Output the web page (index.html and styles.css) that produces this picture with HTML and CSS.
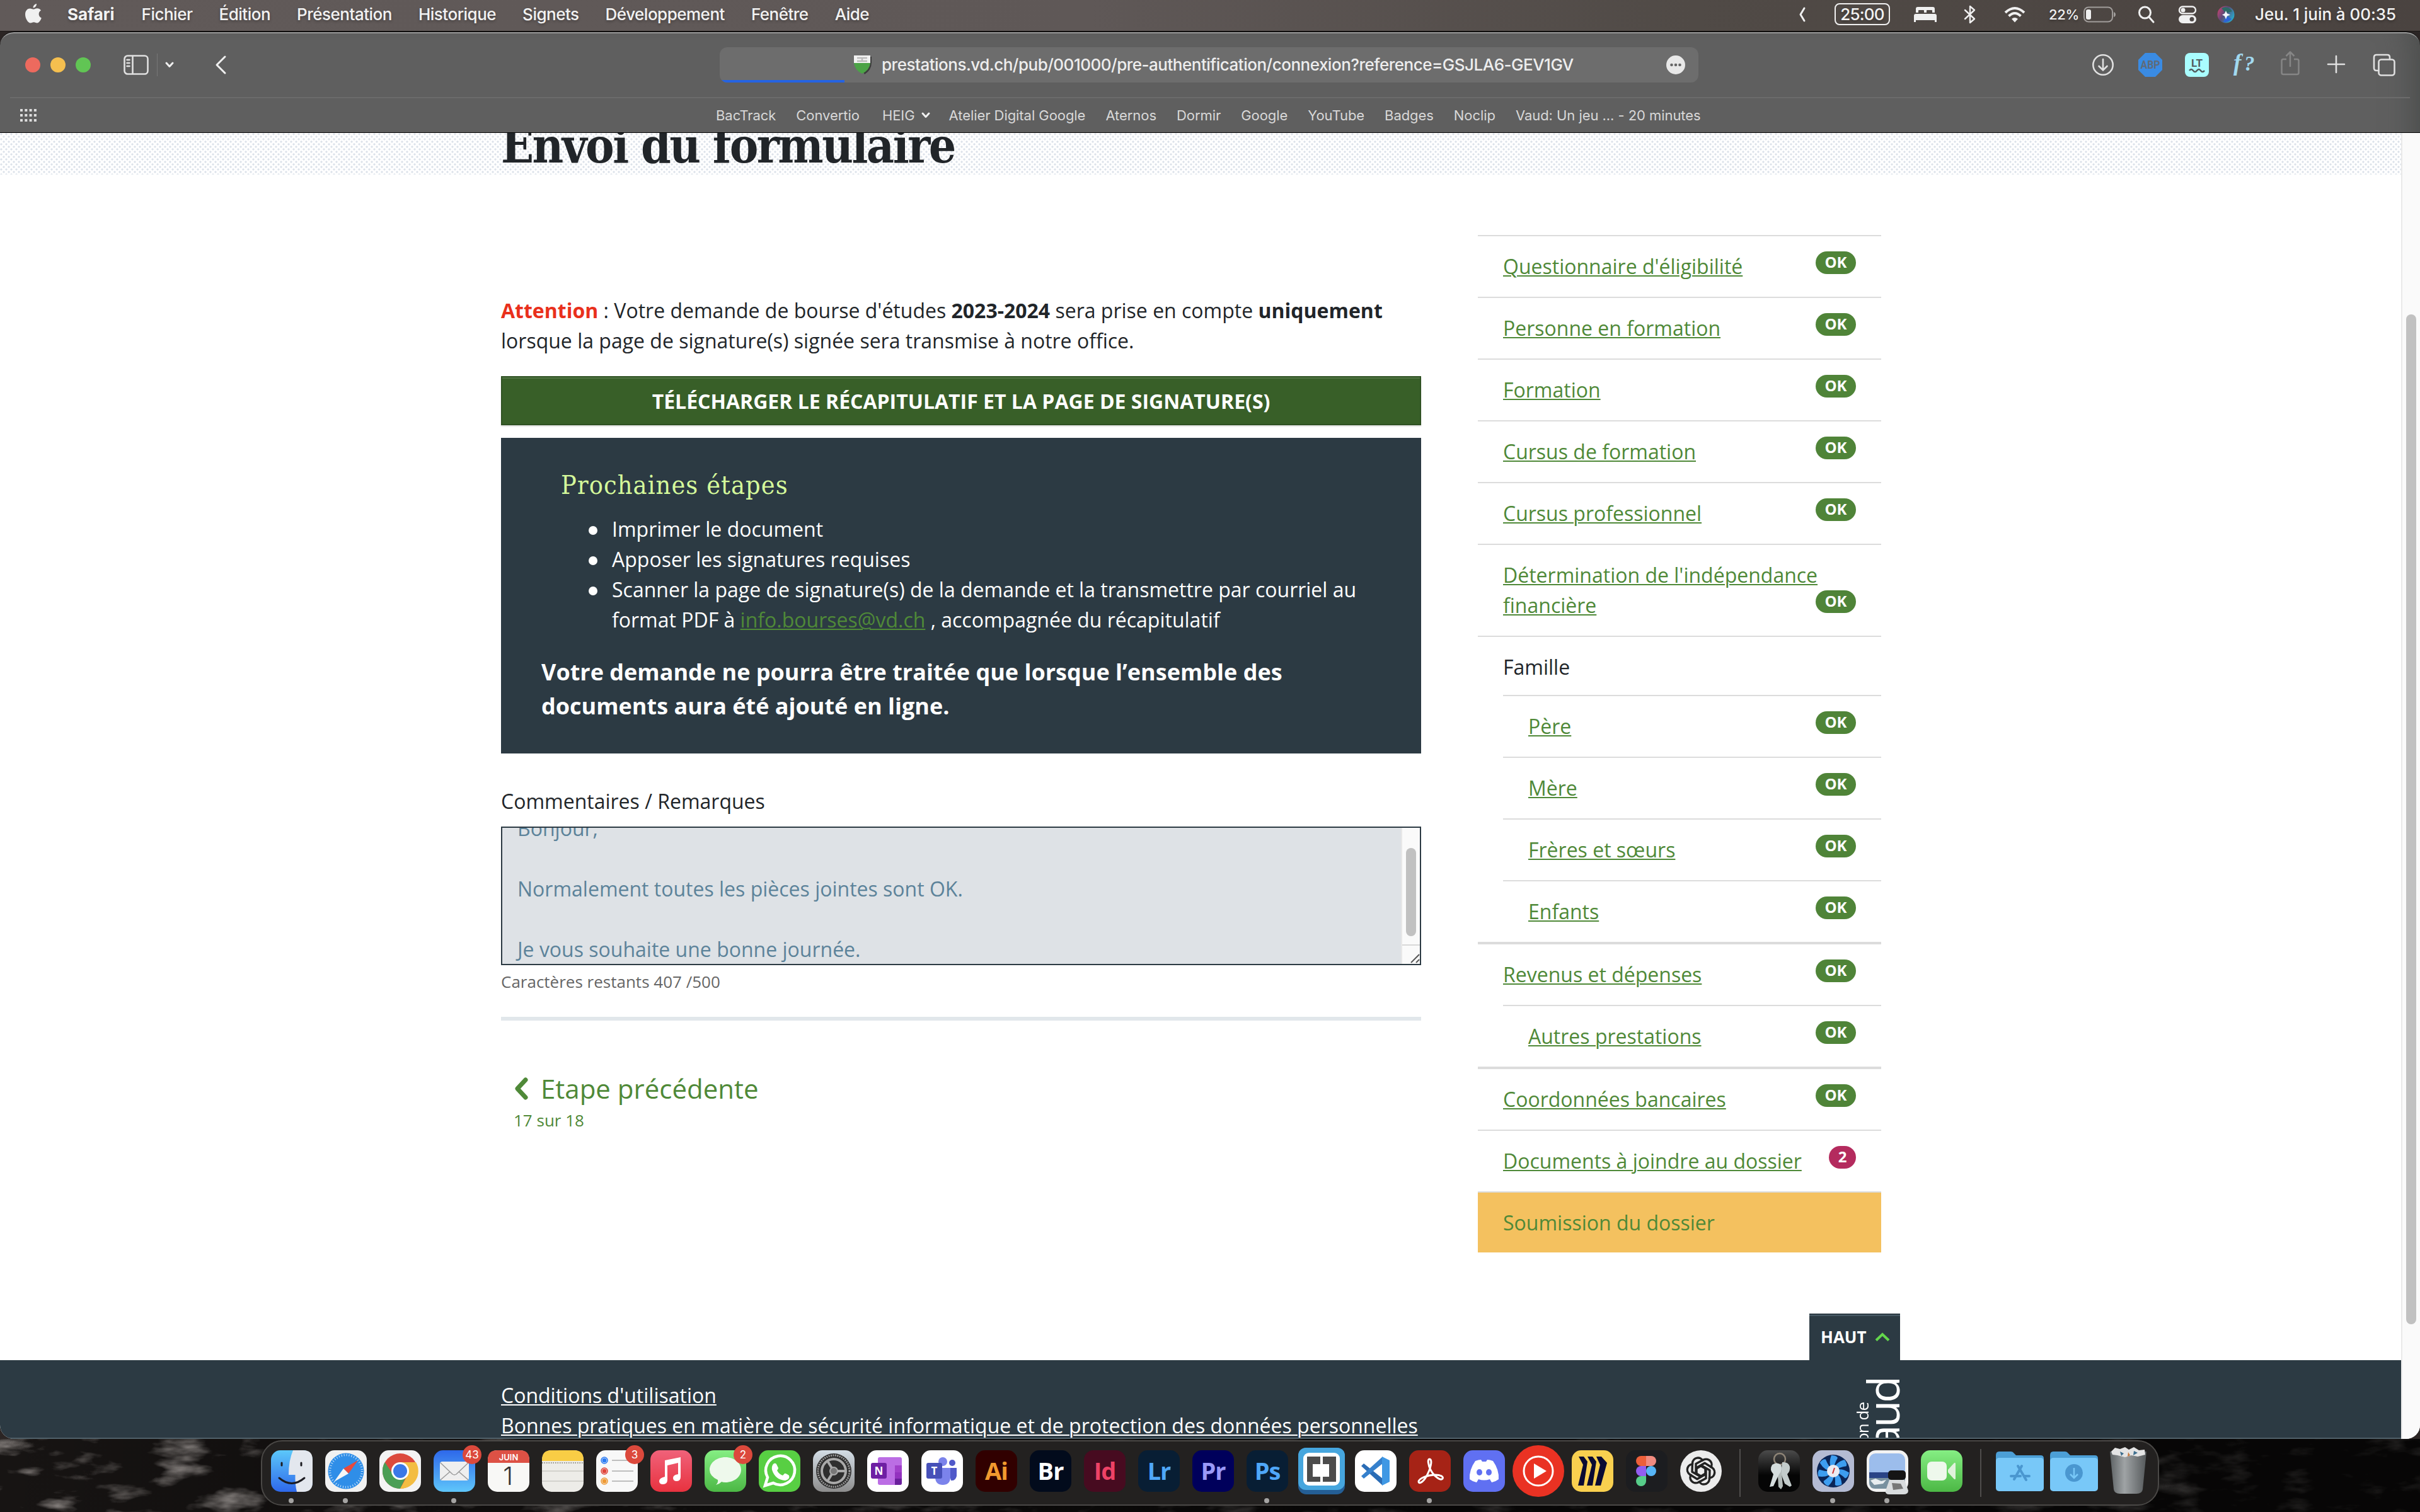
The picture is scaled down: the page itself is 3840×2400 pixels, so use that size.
FILE: index.html
```html
<!DOCTYPE html>
<html lang="fr">
<head>
<meta charset="utf-8">
<title>Envoi du formulaire</title>
<link rel="stylesheet" href="styles.css">
</head>
<body>
<header class="menubar">
  <nav class="menus">
    <svg class="apple" width="26" height="32" viewBox="0 0 26 32"><path fill="#f0f0f0" d="M18 0c.3 3-2.400 6.500-5.400 6.500C12.200 3.500 15 .5 18 0zM13.300 8.800c1.400 0 3-1.500 5.700-1.500 2.200 0 4.600 1.200 6 3.200-5 3-4.200 10 .8 12-1.100 3.300-4 8-6.800 8-2.200 0-2.800-1.300-5.400-1.300-2.500 0-3.300 1.300-5.300 1.300C4.500 30.500 0 23.500 0 16.800c0-6 3.800-9.300 7.500-9.300 2.500 0 4.400 1.300 5.800 1.300z"/></svg>
    <b>Safari</b><span>Fichier</span><span>Édition</span><span>Présentation</span><span>Historique</span><span>Signets</span><span>Développement</span><span>Fenêtre</span><span>Aide</span>
  </nav>
  <div class="status">
    <svg width="10" height="24" viewBox="0 0 10 24"><path class="ln w3" d="M8 2L2 12l6 10"/></svg>
    <span class="timer">25:00</span>
    <svg class="m-bed" width="38" height="26" viewBox="0 0 38 26"><path fill="#f0f0f0" d="M4 10V4q0-3 3-3h24q3 0 3 3v6h-4V7q0-1-1-1h-7q-1 0-1 1v3h-4V7q0-1-1-1H9q-1 0-1 1v3zM1 25V15q0-3 3-3h30q3 0 3 3v10h-3v-3H4v3z"/></svg>
    <svg class="m-bt" width="20" height="30" viewBox="0 0 20 30"><path class="ln w2" d="M2 8l15 14-7 6V2l7 6L2 22"/></svg>
    <svg class="m-wifi" width="34" height="26" viewBox="0 0 34 26"><path fill="none" stroke="#f0f0f0" stroke-width="4" d="M2 10q15-14 30 0M7.500 15.500q9.500-9 19 0"/><path fill="#f0f0f0" d="M12 20q5-4 10 0l-5 5.500z"/></svg>
    <span class="pct">22%</span>
    <svg class="m-bat" width="52" height="26" viewBox="0 0 52 26"><rect x="1" y="1.500" width="45" height="23" rx="7" fill="none" stroke="#a09c9a" stroke-width="2"/><rect x="4" y="5" width="8" height="16" rx="3" fill="#f0f0f0"/><path fill="#a09c9a" d="M48 9q3 1 3 4t-3 4z"/></svg>
    <svg class="m-search" width="26" height="28" viewBox="0 0 26 28"><circle class="ln w3" cx="10.500" cy="11" r="9"/><path class="ln w3" d="M17 18l7 8"/></svg>
    <svg class="m-ctl" width="30" height="28" viewBox="0 0 30 28"><rect x="2" y="1.500" width="26" height="11" rx="5.500" class="ln w2"/><circle cx="8" cy="7" r="3.500" fill="#f0f0f0"/><rect x="1" y="15" width="28" height="13" rx="6.500" fill="#f0f0f0"/><circle cx="22" cy="21.500" r="3.500" fill="#504a48"/></svg>
    <svg class="m-siri" width="28" height="28" viewBox="0 0 28 28"><defs><linearGradient id="siri" x1="0" x2="1" y2=".6"><stop stop-color="#e0406f"/><stop offset=".5" stop-color="#5a4a78"/><stop offset="1" stop-color="#2aa6c8"/></linearGradient></defs><circle cx="14" cy="14" r="13.500" fill="url(#siri)"/><path fill="#2b6a66" d="M7 4q10-5 17 5l-10 3z"/><path fill="#2c64d8" d="M10 26l5-10 8 5q-5 6-13 5z"/><path fill="#f4f6fb" d="M14 8l2 4.500 5 2-5 2-2 5-2-5-4-2 4-2z"/></svg>
    <span class="date">Jeu. 1 juin à 00:35</span>
  </div>
</header>

<div class="window">
  <div class="toolbar">
    <div class="tb-left">
      <i class="light red"></i><i class="light amber"></i><i class="light green"></i>
      <svg class="t-side" width="40" height="32" viewBox="0 0 40 32"><rect class="tl" x="1.500" y="1.500" width="37" height="29" rx="5"/><path class="tl" d="M14.500 2v28M5.500 8h4M5.500 13h4M5.500 18h4"/></svg>
      <i class="t-div"></i>
      <svg class="t-down" width="14" height="10" viewBox="0 0 14 10"><path class="ln w3" d="M2 2l5 5.500L12 2"/></svg>
      <svg class="t-back" width="18" height="30" viewBox="0 0 18 30"><path class="ln w3" d="M16 2L3 15l13 13"/></svg>
    </div>
    <div class="address">
      <svg class="fav" width="30" height="32" viewBox="0 0 30 32"><path fill="#3b3b3b" d="M3 3h26v9q0 12-11 19z"/><path fill="#f2f2f2" d="M1 1h26v12H1z"/><path fill="#4ba346" d="M1 13h26q-1 11-13 17Q2 24 1 13z"/><path stroke="#bbb" stroke-width="2.500" d="M6 5h16M6 10h16M14 5v5"/></svg>
      <span>prestations.vd.ch/pub/001000/pre-authentification/connexion?reference=GSJLA6-GEV1GV</span>
      <svg class="more" width="30" height="30" viewBox="0 0 30 30"><circle cx="15" cy="15" r="15" fill="#e8e8e8"/><g fill="#666"><circle cx="8.500" cy="15" r="2.300"/><circle cx="15" cy="15" r="2.300"/><circle cx="21.500" cy="15" r="2.300"/></g></svg>
      <i class="progress"></i>
    </div>
    <div class="tb-right">
      <svg width="36" height="36" viewBox="0 0 36 36"><circle class="tl" cx="18" cy="18" r="15.700"/><path class="tl" d="M18 9v17M11.500 20l6.500 6.500 6.500-6.500"/></svg>
      <svg class="x-abp" width="38" height="38" viewBox="0 0 38 38"><path fill="#3a8be3" d="M11 0h16l11 11v16L27 38H11L0 27V11z"/><text x="19" y="25" text-anchor="middle" textLength="31" lengthAdjust="spacingAndGlyphs" font-family="Roboto" font-size="18" font-weight="700" fill="#5f6a78">ABP</text></svg>
      <svg class="x-lt" width="38" height="38" viewBox="0 0 38 38"><rect width="38" height="38" rx="8" fill="#a9fdff"/><text x="19" y="22" text-anchor="middle" font-family="Roboto" font-size="17" font-weight="700" fill="#525c5e">LT</text><path fill="none" stroke="#525c5e" stroke-width="2.500" d="M7 28q3-4 6 0t6 0 6 0 6 0"/></svg>
      <svg class="x-f" width="42" height="38" viewBox="0 0 42 38"><text x="5" y="28" font-family="Liberation Serif" font-style="italic" font-size="37" font-weight="700" fill="#a2d9ef">f</text><text x="22" y="28" font-family="Liberation Serif" font-style="italic" font-size="33" font-weight="700" fill="#a2d9ef">?</text></svg>
      <svg class="x-share" width="30" height="40" viewBox="0 0 30 40"><path fill="none" stroke="#868686" stroke-width="2.500" stroke-linejoin="round" d="M9 14H4q-2.500 0-2.500 2.500v19Q1.500 38 4 38h22q2.500 0 2.500-2.500v-19Q28.500 14 26 14h-5M15 26V3M8.500 9L15 2.500 21.500 9"/></svg>
      <svg class="x-plus" width="28" height="28" viewBox="0 0 28 28"><path class="tl" d="M14 1v26M1 14h26"/></svg>
      <svg class="x-tabs" width="36" height="36" viewBox="0 0 36 36"><path class="tl" d="M9 27H6q-4 0-4-4V6q0-4 4-4h17q4 0 4 4v3"/><rect class="tl" x="9.500" y="9.500" width="25" height="25" rx="4"/></svg>
    </div>
  </div>
  <div class="bookmarks">
    <svg class="grid" width="26" height="20" viewBox="0 0 26 20"><path stroke="#ddd" stroke-width="4" stroke-dasharray="4 3.300" d="M0 2h26M0 10h26M0 18h26"/></svg>
    <span>BacTrack</span><span>Convertio</span><span class="heig">HEIG<svg width="14" height="10" viewBox="0 0 14 10"><path class="ln w3" d="M2 2l5 5.500L12 2"/></svg></span><span>Atelier Digital Google</span><span>Aternos</span><span>Dormir</span><span>Google</span><span>YouTube</span><span>Badges</span><span>Noclip</span><span>Vaud: Un jeu ... - 20 minutes</span>
  </div>

  <div class="viewport">
    <div class="page">
      <div class="band"><h1>Envoi du formulaire</h1></div>
      <main>
        <section class="form">
          <p class="notice"><b class="warn">Attention</b> : Votre demande de bourse d'études <b>2023-2024</b> sera prise en compte <b>uniquement</b><br>lorsque la page de signature(s) signée sera transmise à notre office.</p>
          <a class="download">TÉLÉCHARGER LE RÉCAPITULATIF ET LA PAGE DE SIGNATURE(S)</a>
          <div class="panel">
            <h2>Prochaines étapes</h2>
            <ul>
              <li>Imprimer le document</li>
              <li>Apposer les signatures requises</li>
              <li>Scanner la page de signature(s) de la demande et la transmettre par courriel au<br>format PDF à <a>info.bourses@vd.ch</a> , accompagnée du récapitulatif</li>
            </ul>
            <p>Votre demande ne pourra être traitée que lorsque l’ensemble des<br>documents aura été ajouté en ligne.</p>
          </div>
          <label>Commentaires / Remarques</label>
          <div class="textarea">
            <div class="ta-text">Bonjour,<br><br>Normalement toutes les pièces jointes sont OK.<br><br>Je vous souhaite une bonne journée.</div>
            <div class="ta-bar"><div class="ta-track"><i></i></div><svg width="30" height="29" viewBox="0 0 30 29"><path stroke="#555" stroke-width="2" d="M14 27L27 14M22 27l5-5"/></svg></div>
          </div>
          <p class="count">Caractères restants 407 /500</p>
          <hr>
          <div class="prev">
            <div class="prev-link"><svg width="24" height="38" viewBox="0 0 24 38"><path fill="none" stroke="#4f8938" stroke-width="7" stroke-linecap="round" stroke-linejoin="round" d="M19 5L6 19l13 14"/></svg>Etape précédente</div>
            <div class="prev-step">17 sur 18</div>
          </div>
        </section>
        <aside class="steps">
          <div class="step"><a>Questionnaire d'éligibilité</a><em>OK</em></div>
          <div class="step"><a>Personne en formation</a><em>OK</em></div>
          <div class="step"><a>Formation</a><em>OK</em></div>
          <div class="step"><a>Cursus de formation</a><em>OK</em></div>
          <div class="step"><a>Cursus professionnel</a><em>OK</em></div>
          <div class="step tall"><a>Détermination de l'indépendance<br>financière</a><em>OK</em></div>
          <div class="step title">Famille</div>
          <div class="sub">
            <div class="step"><a>Père</a><em>OK</em></div>
            <div class="step"><a>Mère</a><em>OK</em></div>
            <div class="step"><a>Frères et sœurs</a><em>OK</em></div>
            <div class="step"><a>Enfants</a><em>OK</em></div>
          </div>
          <div class="step after"><a>Revenus et dépenses</a><em>OK</em></div>
          <div class="sub"><div class="step"><a>Autres prestations</a><em>OK</em></div></div>
          <div class="step after"><a>Coordonnées bancaires</a><em>OK</em></div>
          <div class="step"><a>Documents à joindre au dossier</a><em class="todo">2</em></div>
          <div class="step current">Soumission du dossier</div>
        </aside>
      </main>
      <div class="top-row"><a class="top">HAUT<svg width="24" height="16" viewBox="0 0 24 16"><path fill="none" stroke="#63d64b" stroke-width="4" d="M2 13.500L12 4l10 9.500"/></svg></a></div>
      <footer>
        <div class="links"><a>Conditions d'utilisation</a><a>Bonnes pratiques en matière de sécurité informatique et de protection des données personnelles</a></div>
        <div class="logo"><span class="canton">canton de</span><span class="vaud">vaud</span></div>
      </footer>
    </div>
    <div class="scroll"><i></i></div>
  </div>
</div>

<div class="desktop">
  <svg class="rocks" width="3840" height="116" viewBox="0 0 3840 116" preserveAspectRatio="none"><defs><filter id="soft" x="0" y="0" width="1" height="1" filterUnits="objectBoundingBox"><feTurbulence type="fractalNoise" baseFrequency=".012 .035" numOctaves="4" seed="4"/><feColorMatrix values="0 0 0 0 .5  0 0 0 0 .46  0 0 0 0 .44  2.200 0 0 0 -1.150"/></filter><linearGradient id="fade"><stop stop-color="#000" stop-opacity="0"/><stop offset=".14" stop-color="#000" stop-opacity=".3"/><stop offset=".6" stop-color="#000" stop-opacity=".7"/><stop offset="1" stop-color="#000" stop-opacity=".7"/></linearGradient></defs><rect width="3840" height="116" fill="#171413"/><rect width="3840" height="116" filter="url(#soft)"/><rect width="3840" height="116" fill="url(#fade)"/></svg>
  <div class="dock">
    <div class="app run"><svg viewBox="0 0 66 66"><defs><linearGradient id="fi" y2="1" x2="0"><stop stop-color="#5cc8fa"/><stop offset="1" stop-color="#2e68ea"/></linearGradient></defs><rect width="66" height="66" rx="15" fill="url(#fi)"/><path fill="#e3e7ee" d="M35 0h16q15 0 15 15v36q0 15-15 15H41q-3-12-2.500-27H28Q28 16 35 0z"/><path fill="none" stroke="#1c1c22" stroke-width="3" stroke-linecap="round" d="M17 20v4M48 20v4M13 44q20 17 40 0"/></svg></div>
    <div class="app run"><svg viewBox="0 0 66 66"><rect width="66" height="66" rx="15" fill="#f1f1f1"/><circle cx="33" cy="33" r="28.500" fill="#2f8ee8"/><circle cx="33" cy="33" r="25.500" fill="none" stroke="#cfe6fa" stroke-width="3.500" stroke-dasharray="1 3"/><path fill="#e8493c" d="M52 16L29 29l8 8z"/><path fill="#f6f6f6" d="M14 50l15-21 8 8z"/></svg></div>
    <div class="app"><svg viewBox="0 0 66 66"><rect width="66" height="66" rx="15" fill="#f3f3f3"/><circle cx="33" cy="33" r="28" fill="#dc4a3d"/><path fill="#4a9e55" d="M8.700 19A28 28 0 0 0 33 61l11-22-22 0z"/><path fill="#f3bd42" d="M33 61a28 28 0 0 0 25-42H33l12 20z"/><circle cx="33" cy="33" r="14" fill="#fff"/><circle cx="33" cy="33" r="11" fill="#3b78e7"/></svg></div>
    <div class="app run"><svg viewBox="0 0 66 66"><defs><linearGradient id="ma" y2="1" x2="0"><stop stop-color="#2e68ea"/><stop offset="1" stop-color="#5fc6fb"/></linearGradient></defs><rect width="66" height="66" rx="15" fill="url(#ma)"/><rect x="10" y="18" width="46" height="30" rx="4" fill="#efefef"/><path fill="none" stroke="#999" stroke-width="1.500" d="M11 20l19 18q3 2 6 0l19-18M11 47l15-13M55 47L40 34"/></svg><em>43</em></div>
    <div class="app"><svg viewBox="0 0 66 66"><rect width="66" height="66" rx="15" fill="#f8f8f6"/><path fill="#dd5145" d="M0 20v-5Q0 0 15 0h36q15 0 15 15v5z"/><text x="33" y="16" text-anchor="middle" font-family="Inter" font-size="13" font-weight="600" fill="#fff">JUIN</text><text x="32" y="55" text-anchor="middle" font-family="Inter" font-weight="300" font-size="40" fill="#333">1</text></svg></div>
    <div class="app"><svg viewBox="0 0 66 66"><rect width="66" height="66" rx="15" fill="#edece8"/><path fill="#f9cd45" d="M0 17v-2Q0 0 15 0h36q15 0 15 15v2z"/><path stroke="#b9b8b2" d="M0 33h66M0 49h66"/><path stroke="#8f8d86" stroke-width="2" stroke-dasharray="1.500 2" d="M0 20h66"/></svg></div>
    <div class="app"><svg viewBox="0 0 66 66"><rect width="66" height="66" rx="15" fill="#f8f8f8"/><path stroke="#aaa" stroke-width="1.500" d="M25 16h34M25 33h34M25 49h34"/><g stroke-width="1.500" fill="none"><circle cx="13" cy="16" r="5" stroke="#2b7bf3"/><circle cx="13" cy="33" r="5" stroke="#e0443a"/><circle cx="13" cy="49" r="5" stroke="#ee9a36"/></g><circle cx="13" cy="16" r="3.500" fill="#2b7bf3"/><circle cx="13" cy="33" r="3.500" fill="#e0443a"/><circle cx="13" cy="49" r="3.500" fill="#ee9a36"/></svg><em>3</em></div>
    <div class="app"><svg viewBox="0 0 66 66"><defs><linearGradient id="mu" y2="1" x2="0"><stop stop-color="#f0627a"/><stop offset="1" stop-color="#e8323f"/></linearGradient></defs><rect width="66" height="66" rx="15" fill="url(#mu)"/><path fill="#fff" d="M23 16l25-5v31q0 7-6 7-6 0-6-5t8-6V20l-17 4v23q0 7-7 7-6 0-6-5t9-7z"/></svg></div>
    <div class="app"><svg viewBox="0 0 66 66"><defs><linearGradient id="gr" y2="1" x2="0"><stop stop-color="#85ee83"/><stop offset="1" stop-color="#4cb845"/></linearGradient></defs><rect width="66" height="66" rx="15" fill="url(#gr)"/><path fill="#eef9ec" d="M33 11c14 0 25 9 25 20S47 51 33 51q-4 0-6-1-4 4-9 5 4-4 3-8Q8 41 8 31c0-11 11-20 25-20z"/></svg><em>2</em></div>
    <div class="app"><svg viewBox="0 0 66 66"><rect width="66" height="66" rx="15" fill="#58cf43"/><path fill="none" stroke="#fff" stroke-width="4.500" d="M10 56l4-13A23 23 0 1 1 23 52z"/><path fill="#fff" d="M24 21q3-1 4 1l3 6q0 2-2 4 3 6 9 8l3-3q1-1 7 3 2 6-6 8-16-1-21-17-1-7 3-10z"/></svg></div>
    <div class="app"><svg viewBox="0 0 66 66"><defs><linearGradient id="se" y2="1" x2="0"><stop stop-color="#d3dde5"/><stop offset="1" stop-color="#8d8d8d"/></linearGradient></defs><rect width="66" height="66" rx="15" fill="url(#se)"/><circle cx="33" cy="33" r="28" fill="#2e2e2e"/><circle cx="33" cy="33" r="25" fill="none" stroke="#9b9b9b" stroke-width="3" stroke-dasharray="2 1.500"/><circle cx="33" cy="33" r="19" fill="none" stroke="#a9a9a9" stroke-width="4"/><path stroke="#a9a9a9" stroke-width="4" d="M33 33h19M33 33l-10-16M33 33l-10 16"/><circle cx="33" cy="33" r="6" fill="#777" stroke="#a9a9a9" stroke-width="2"/></svg></div>
    <div class="app"><svg viewBox="0 0 66 66"><rect width="66" height="66" rx="15" fill="#fff"/><rect x="17" y="11" width="38" height="44" rx="3" fill="#bb6de4"/><path fill="#a03fc9" d="M44 24h11v11H44z"/><path fill="#9332bf" d="M44 35h11v10H44z"/><path fill="#6a1f9c" d="M44 45h11v7q0 3-3 3h-8z"/><rect x="6" y="20" width="25" height="25" rx="3" fill="#6e1fa3"/><text x="18.500" y="39" text-anchor="middle" font-family="Open Sans" font-size="17" font-weight="700" fill="#fff">N</text></svg></div>
    <div class="app"><svg viewBox="0 0 66 66"><rect width="66" height="66" rx="15" fill="#fff"/><circle cx="34" cy="18" r="7" fill="#7b83eb"/><circle cx="49" cy="20" r="5" fill="#5059c9"/><path fill="#5059c9" d="M42 28h14v13q-2 8-9 7z"/><path fill="#7b83eb" d="M22 28h24v16q-1 11-12 11T22 44z"/><rect x="8" y="20" width="25" height="25" rx="3" fill="#4650b8"/><text x="20.500" y="39" text-anchor="middle" font-family="Open Sans" font-size="17" font-weight="700" fill="#fff">T</text></svg></div>
    <div class="app"><span class="adobe ai">Ai</span></div>
    <div class="app"><span class="adobe br">Br</span></div>
    <div class="app"><span class="adobe id">Id</span></div>
    <div class="app"><span class="adobe lr">Lr</span></div>
    <div class="app"><span class="adobe pr">Pr</span></div>
    <div class="app run"><span class="adobe ps">Ps</span></div>
    <div class="app"><svg viewBox="0 0 66 66"><rect x="-4" y="-4" width="74" height="74" rx="13" fill="#245e95"/><rect x="-4" y="-4" width="74" height="67" rx="12" fill="#46a6de"/><rect x="4" y="4" width="58" height="52" rx="9" fill="#fff"/><path fill="#4c4c4c" d="M10 10h21v12H19v20h12v8H10zM56 10H35v12h10v20H35v8h21z"/></svg></div>
    <div class="app"><svg viewBox="0 0 66 66"><rect width="66" height="66" rx="15" fill="#fff"/><path fill="#2a6cb5" d="M10 25l4-4 30 24v11z"/><path fill="#3580cc" d="M10 41l4 4 30-24V10z"/><path fill="#3f98e4" d="M43 10l12 6v34l-12 6z"/></svg></div>
    <div class="app run"><svg viewBox="0 0 66 66"><rect width="66" height="66" rx="15" fill="#a62316"/><path fill="none" stroke="#fff" stroke-width="3" stroke-linejoin="round" d="M32 14c6 0 2 16-5 28-5 9-12 12-12 8 0-5 14-11 26-11 9 0 14 3 12 6-3 4-14-4-19-14-4-8-5-17-2-17z"/></svg></div>
    <div class="app"><svg viewBox="0 0 66 66"><rect width="66" height="66" rx="15" fill="#6070f2"/><path fill="#fff" d="M19 17q5-2 9-2l2 3h6l2-3q4 0 9 2 10 14 9 29-5 4-11 5l-3-5q-9 3-18 0l-3 5q-6-1-11-5-1-15 9-29z"/><ellipse cx="25.500" cy="35" rx="4.500" ry="5" fill="#6070f2"/><ellipse cx="40.500" cy="35" rx="4.500" ry="5" fill="#6070f2"/></svg></div>
    <div class="app"><svg viewBox="0 0 66 66"><circle cx="33" cy="33" r="41" fill="#ea3223"/><circle cx="33" cy="33" r="23" fill="none" stroke="#fff" stroke-width="3"/><path fill="#fff" d="M26 21l20 12-20 12z"/></svg></div>
    <div class="app"><svg viewBox="0 0 66 66"><rect width="66" height="66" rx="15" fill="#f9d04f"/><path fill="#0a0b33" d="M11 10h8l6 8-6 38h-9l8-33zM25 10h8l6 8-6 38h-9l8-33zM39 10h8l9 10-10 36h-9l8-33z"/></svg></div>
    <div class="app"><svg viewBox="0 0 66 66"><rect width="66" height="66" rx="15" fill="#1c1d20"/><path fill="#ec5f3a" d="M32 9v16h-8a8 8 0 0 1 0-16z"/><path fill="#f08b80" d="M32 9h8a8 8 0 0 1 0 16h-8z"/><path fill="#925ef0" d="M32 25v16h-8a8 8 0 0 1 0-16z"/><circle cx="40" cy="33" r="8" fill="#56b5f7"/><path fill="#57cd8a" d="M32 41v8a8 8 0 1 1-8-8z"/></svg></div>
    <div class="app"><svg viewBox="0 0 66 66"><circle cx="33" cy="33" r="33" fill="#ececec"/><g fill="none" stroke="#222" stroke-width="3.400" stroke-linejoin="round"><path id="petal" d="M33 25l8 4.500v15L29 51c-9 4-17-6-11-13"/><use href="#petal" transform="rotate(60 33 33)"/><use href="#petal" transform="rotate(120 33 33)"/><use href="#petal" transform="rotate(180 33 33)"/><use href="#petal" transform="rotate(240 33 33)"/><use href="#petal" transform="rotate(300 33 33)"/></g></svg></div>
    <i class="sep"></i>
    <div class="app"><svg viewBox="0 0 66 66"><defs><linearGradient id="ke" y2="1" x2="0"><stop stop-color="#4b4b4b"/><stop offset=".6" stop-color="#050505"/></linearGradient></defs><rect width="66" height="66" rx="15" fill="url(#ke)"/><ellipse cx="34" cy="14" rx="9" ry="9" fill="none" stroke="#8f8577" stroke-width="2.500"/><path fill="#c3cccb" d="M38 19q10-1 12 7 1 7-4 12l7 18-3 2-8-5-6-16z"/><path fill="#b4bcba" d="M30 24h6l3 33-3 5-4-4z"/><path fill="#d5dddd" d="M22 23q7-5 14 0 3 9-3 15l-9 19-6 1 6-20q-7-7-2-15z"/></svg></div>
    <div class="app run"><svg viewBox="0 0 66 66"><rect width="66" height="66" rx="15" fill="#b4bbd3"/><circle cx="33" cy="33" r="26" fill="#0b2557"/><g fill="#3d9df0"><path id="blade" d="M33 33q-9-10-3-25 8 0 10 4-6 10-7 21z"/><use href="#blade" transform="rotate(51.400 33 33)"/><use href="#blade" transform="rotate(102.800 33 33)"/><use href="#blade" transform="rotate(154.300 33 33)"/><use href="#blade" transform="rotate(205.700 33 33)"/><use href="#blade" transform="rotate(257.100 33 33)"/><use href="#blade" transform="rotate(308.600 33 33)"/></g><circle cx="33" cy="33" r="10" fill="#ececf2"/><path stroke="#c33" stroke-width="2" d="M32 37l3-9"/></svg></div>
    <div class="app run"><svg viewBox="0 0 66 66"><rect width="66" height="66" rx="15" fill="#f2f2f2"/><rect x="4" y="5" width="57" height="56" rx="10" fill="#9cbdec"/><path fill="#2a4486" d="M4 35h57v10H4z"/><path fill="#78909f" d="M4 44h57v7q0 10-10 10H14Q4 61 4 51z"/><path fill="#e8edf0" d="M6 48l8-3 9 4 8-2-5 6-14 2z"/><rect x="34" y="32" width="28" height="15" rx="5" fill="#151515"/><path fill="#d9dcde" d="M36 47h24l6 17q0 6-8 6H36q-7 0-6-6z"/><path fill="#777" d="M40 52l14 1 4 8-16 2z"/></svg></div>
    <div class="app"><svg viewBox="0 0 66 66"><rect width="66" height="66" rx="15" fill="url(#gr)"/><rect x="10" y="18" width="31" height="30" rx="7" fill="#eef8ec"/><path fill="#dff2dc" d="M43 31l9-10q3-3 3 1v22q0 4-3 1l-9-10z"/></svg></div>
    <i class="sep"></i>
    <div class="app"><svg viewBox="0 0 66 66"><path fill="#4c9fd6" d="M-5 8q0-6 5-6h19q3 0 5 3l3 3h39q5 0 5 5v20H-5z"/><rect x="-5" y="12" width="76" height="53" rx="5" fill="#78c8f8"/><path fill="none" stroke="#4a97d0" stroke-width="4" stroke-linecap="round" d="M36 25L24 46M30 25l13 22M19 41h15M40 41h8"/></svg></div>
    <div class="app"><svg viewBox="0 0 66 66"><path fill="#4c9fd6" d="M-5 8q0-6 5-6h19q3 0 5 3l3 3h39q5 0 5 5v20H-5z"/><rect x="-5" y="12" width="76" height="53" rx="5" fill="#78c8f8"/><circle cx="33" cy="36" r="14" fill="#4a97d0"/><path fill="none" stroke="#78c8f8" stroke-width="2.500" d="M33 28v15M27 38l6 6 6-6"/></svg></div>
    <div class="app"><svg viewBox="0 0 66 66"><defs><linearGradient id="tr"><stop stop-color="#5d6264"/><stop offset=".4" stop-color="#9fa3a5"/><stop offset="1" stop-color="#55595b"/></linearGradient></defs><path fill="url(#tr)" d="M4 2h58l-6 60q-1 7-10 7H20q-9 0-10-7z"/><path fill="#e4e4e4" d="M6 2l6-6 8 2 8-3 6 4 8-4 8 5 9-1 1 8-12 3-10-2-10 3-12-3-8-1z"/><path fill="#3e6f8f" d="M20 2l6 3-4 4zM42 1l6 3-7 4z"/><path fill="#c4763a" d="M33 3l3 5-4 2z"/></svg></div>
  </div>
</div>
</body>
</html>
```
FILE: styles.css
```css
* { box-sizing: border-box; margin: 0; padding: 0; }
body { width: 3840px; height: 2400px; overflow: hidden; display: flex; flex-direction: column; background: #2b2524; font-family: "Open Sans", sans-serif; font-size: 32px; line-height: 48px; color: #212529; }
svg { display: block; flex: none; overflow: visible; }
i, em { font-style: normal; display: block; flex: none; }
.ln { fill: none; stroke: #f0f0f0; stroke-linecap: round; stroke-linejoin: round; }
.w2 { stroke-width: 2.4; }
.w3 { stroke-width: 3; }
.tl { fill: none; stroke: #e0e0e0; stroke-width: 2.6; stroke-linecap: round; }

.menubar { height: 50px; flex: none; display: flex; justify-content: space-between; padding: 0 38px 4px 40px; background: linear-gradient(90deg, #615a59 0, #5f5857 45%, #504a46 70%, #4a4340 100%); color: #f2f2f2; font: 500 26px/46px Inter, sans-serif; border-bottom: 1px solid #1c1817; text-shadow: 0 2px 4px rgba(0,0,0,.3); white-space: nowrap; }
.menus { display: flex; gap: 42px; align-items: center; letter-spacing: -.5px; }
.menus b { letter-spacing: -.05px; margin-right: 1px; }
.apple { margin-right: -1px; margin-top: -2px; }
.status { display: flex; align-items: center; }
.timer { margin-left: 46px; width: 88px; height: 35px; line-height: 31px; border: 2px solid #f0f0f0; border-radius: 8px; text-align: center; letter-spacing: -.8px; }
.m-bed { margin-left: 37px; }
.m-bt { margin-left: 42px; }
.m-wifi { margin-left: 44px; }
.pct { margin-left: 37px; font-size: 22px; width: 47px; letter-spacing: -.3px; }
.m-bat { margin-left: 8px; }
.m-search { margin-left: 35px; }
.m-ctl { margin-left: 37px; }
.m-siri { margin-left: 32px; }
.date { margin-left: 32px; width: 224px; letter-spacing: -.05px; }

.window { height: 2234px; flex: none; border-radius: 22px; overflow: hidden; background: #5f5f5f; border-top: 1px solid #000; box-shadow: inset 0 3px 0 -1px #999, inset -60px 0 50px -50px #4a4c4b; display: flex; flex-direction: column; }
.toolbar { height: 105px; flex: none; display: flex; margin-right: 16px; margin-left: 16px; align-items: center; border-bottom: 2px solid #6b6b6b; }
.tb-left { width: 1126px; padding-left: 24px; display: flex; align-items: center; }
.light { width: 24px; height: 24px; border-radius: 50%; margin-right: 16px; }
.red { background: #ed6a5e; }
.amber { background: #f5bf4f; }
.green { background: #61c554; }
.t-side { margin-left: 36px; }
.t-div { width: 1px; height: 36px; background: #777; margin-left: 13px; }
.t-down { margin-left: 12px; }
.t-back { margin-left: 65px; }
.address { position: relative; width: 1553px; height: 56px; border-radius: 12px; overflow: hidden; background: #6d6d6d; display: flex; align-items: center; padding-left: 212px; font: 500 26px/56px Inter, sans-serif; color: #ededed; }
.address span { margin-left: 15px; width: 1096px; letter-spacing: -.5px; white-space: nowrap; }
.more { margin-left: 149px; }
.progress { position: absolute; left: 0; bottom: 0; width: 198px; height: 4px; background: #2563e2; }
.tb-right { margin-left: 624px; display: flex; align-items: center; }
.x-abp { margin-left: 38px; }
.x-lt { margin-left: 36px; }
.x-f { margin-left: 34px; }
.x-share { margin-left: 38px; margin-top: -6px; }
.x-plus { margin-left: 44px; margin-top: -2px; }
.x-tabs { margin-left: 44px; }
.bookmarks { height: 55px; flex: none; display: flex; align-items: center; gap: 32px; color: #d8d8d8; font: 400 22px/52px Inter, sans-serif; letter-spacing: -.06px; border-bottom: 1px solid #000; white-space: nowrap; }
.grid { margin: 0 1046px 0 32px; }
.bookmarks .heig { display: flex; align-items: center; gap: 10px; margin-left: 4px; margin-right: -2px; }

.viewport { flex: 1; display: flex; background: #fff; overflow: hidden; }
.page { width: 3810px; flex: none; display: flex; flex-direction: column; }
.band { height: 66px; flex: none; padding-left: 795px; overflow: hidden; background: radial-gradient(circle at 2px 2px, #dce2ea 1.3px, transparent 1.9px) 0 0/8px 8px, radial-gradient(circle at 6px 6px, #dce2ea 1.3px, transparent 1.9px) 0 0/8px 8px #fff; }
h1 { font: 700 76px/42px "DejaVu Serif Condensed", "DejaVu Serif", serif; font-stretch: condensed; letter-spacing: -2.5px; white-space: nowrap; }
main { height: 1808px; flex: none; display: flex; gap: 90px; padding-left: 795px; }
.form { width: 1460px; padding-top: 192px; white-space: nowrap; }
.warn { color: #e9301c; }
.download { display: block; height: 78px; margin-top: 32px; background: #385f28; border: 2px solid #2f5122; box-shadow: inset 0 2px 0 #527545, 0 2px 2px #ddd; color: #fff; font-weight: 700; line-height: 76px; text-align: center; }
.panel { height: 501px; margin-top: 20px; padding: 50px 64px 0; background: #2c3a43; color: #fff; }
h2 { margin-left: 31px; font: 400 41px/50px "DejaVu Serif Condensed", "DejaVu Serif", serif; font-stretch: condensed; letter-spacing: 1.1px; color: #d5f99b; }
.panel ul { margin: 21px 0 32px; list-style: none; padding-left: 112px; }
.panel li { position: relative; }
.panel li::before { content: ""; position: absolute; left: -37px; top: 19px; width: 14px; height: 14px; border-radius: 50%; background: #fff; }
.panel a { color: #4f8938; text-decoration: underline; text-decoration-thickness: 2px; text-underline-offset: 2px; }
.panel p { font-weight: 700; font-size: 36px; line-height: 54px; }
label { display: block; margin-top: 52px; }
.textarea { height: 220px; margin-top: 16px; border: 2px solid #2c3a43; background: #dee2e6; display: flex; justify-content: space-between; overflow: hidden; color: #5c839a; }
.ta-text { margin: -23px 0 0 24px; }
.ta-bar { width: 30px; background: #fafafa; border-left: 2px solid #e8e8e8; }
.ta-track { height: 187px; padding: 32px 0 0 6px; border-bottom: 2px solid #d8d8d8; }
.ta-track i { width: 16px; height: 140px; border-radius: 8px; background: #c1c1c1; }
.count { margin-top: 8px; font-size: 26px; line-height: 36px; color: #666; }
hr { border: 0; height: 6px; margin-top: 38px; background: #e1e7eb; }
.prev { margin: 78px 0 0 20px; color: #4f8938; }
.prev-link { display: flex; align-items: center; gap: 19px; font-size: 42px; line-height: 60px; }
.prev-step { margin-top: 2px; font-size: 26px; line-height: 36px; }

.steps { width: 640px; padding-top: 96px; }
.step { display: flex; justify-content: space-between; height: 98px; border-top: 2px solid #dcdcdc; padding: 24px 40px 0; white-space: nowrap; }
.step a { color: #4f8938; text-decoration: underline; text-decoration-thickness: 2px; text-underline-offset: 2px; }
.step em { height: 36px; border-radius: 18px; padding: 0 14.500px; background: #4f8438; color: #fff; font-size: 24px; font-weight: 700; line-height: 33px; }
.step em.todo { background: #b42b5e; }
.tall { height: 146px; }
.tall em { margin-top: 48px; margin-left: -40px; }
.title { height: 94px; }
.sub { margin-left: 40px; }
.after { height: 100px; border-top-width: 4px; }
.current { height: 97px; background: #f4c15f; color: #4f8938; }

.top-row { height: 74px; flex: none; padding-left: 2871px; }
.top { display: flex; align-items: center; gap: 13px; width: 144px; height: 74px; padding: 0 0 3px 18px; background: #2c3a43; border-top: 2px solid #2c3a43; box-shadow: inset 0 2px 0 #485a64; color: #fff; font-weight: 700; font-size: 26px; }
footer { flex: 1; display: flex; justify-content: space-between; padding-left: 795px; background: #2c3a43; color: #fff; border-bottom: 2px solid #506069; overflow: hidden; }
.links { display: flex; flex-direction: column; padding-top: 32px; white-space: nowrap; }
.links a { text-decoration: underline; text-decoration-thickness: 2px; text-underline-offset: 2px; }
.logo { display: flex; align-items: flex-start; margin-right: 793px; height: 100px; }
.logo span { writing-mode: vertical-rl; transform: rotate(180deg); white-space: nowrap; }
.canton { font-size: 26px; line-height: 28px; margin: 67px -12px 0 0; letter-spacing: -1px; }
.vaud { font-size: 70px; line-height: 60px; margin-top: 29px; letter-spacing: -4px; }
.scroll { width: 30px; flex: none; background: #fafafa; border-left: 2px solid #e9e9e9; padding: 288px 0 0 6px; }
.scroll i { width: 16px; height: 1603px; border-radius: 8px; background: #c1c1c1; }

.desktop { position: relative; height: 116px; flex: none; padding: 2px 0 0 414px; background: #131110; }
.rocks { position: absolute; left: 0; top: 0; }
.dock { position: relative; width: 3012px; height: 104px; display: flex; padding: 14px 4px 0; border: 2px solid #4a4846; border-radius: 34px; background: #232120; }
.app { position: relative; width: 86px; height: 84px; flex: none; padding-left: 10px; }
.app svg, .adobe { width: 66px; height: 66px; }
.run::after { content: ""; position: absolute; left: 38px; top: 76px; width: 8px; height: 8px; border-radius: 50%; background: #a5a4a3; }
.app em { position: absolute; right: 0; top: -8px; width: 30px; height: 30px; border-radius: 50%; background: #dc493c; color: #fff; text-align: center; font: 400 17px/30px Inter, sans-serif; }
.adobe { display: block; border-radius: 15px; text-align: center; font-weight: 700; font-size: 38px; line-height: 64px; letter-spacing: -1px; }
.ai { background: #310000; color: #f29a2e; }
.br { background: #020b1c; color: #fff; }
.id { background: #470b20; color: #ee4266; }
.lr { background: #081e34; color: #4fa7f8; }
.pr { background: #00005b; color: #9a99f8; }
.ps { background: #081e34; color: #4fa7f8; }
.sep { width: 2px; height: 76px; margin: -2px 18px 0; background: #4f4d4c; }
```
